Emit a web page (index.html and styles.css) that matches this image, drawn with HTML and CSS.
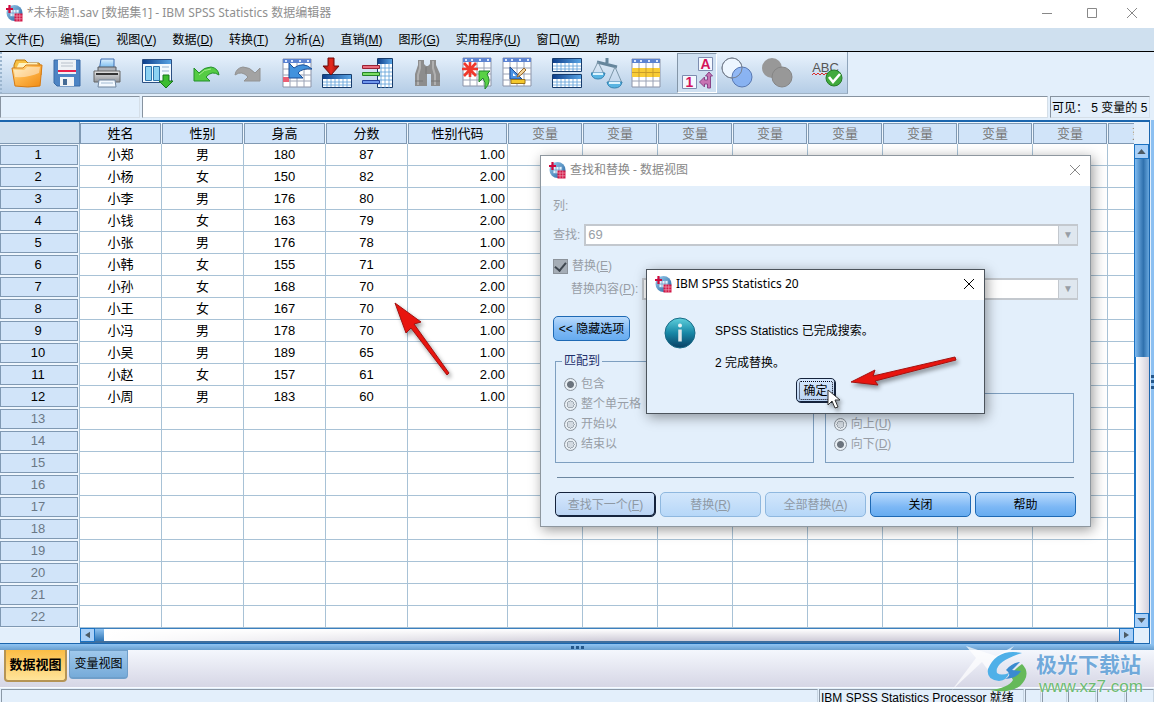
FILE: index.html
```
<!DOCTYPE html>
<html lang="zh-CN">
<head>
<meta charset="utf-8">
<title>*未标题1.sav [数据集1] - IBM SPSS Statistics 数据编辑器</title>
<link rel="stylesheet" href="styles.css">
</head>
<body>
<svg class="defs" width="0" height="0" aria-hidden="true">
  <defs>
    <linearGradient id="gFold" x1="0" y1="0" x2="1" y2="1"><stop offset="0" stop-color="#ffe9a0"/><stop offset=".45" stop-color="#fdb448"/><stop offset="1" stop-color="#f08a12"/></linearGradient>
    <linearGradient id="gBlue" x1="0" y1="0" x2="1" y2="0"><stop offset="0" stop-color="#0e3f8c"/><stop offset="1" stop-color="#58a4e4"/></linearGradient>
    <linearGradient id="gSky" x1="0" y1="0" x2="0" y2="1"><stop offset="0" stop-color="#dff2ff"/><stop offset="1" stop-color="#4ba3e6"/></linearGradient>
    <linearGradient id="gGrey" x1="0" y1="0" x2="0" y2="1"><stop offset="0" stop-color="#e6e6e6"/><stop offset="1" stop-color="#8f9399"/></linearGradient>
    <linearGradient id="gRed" x1="0" y1="0" x2="1" y2="0"><stop offset="0" stop-color="#8e1010"/><stop offset=".5" stop-color="#e8291d"/><stop offset="1" stop-color="#97120e"/></linearGradient>
    <linearGradient id="gInfo" x1="0" y1="0" x2="0" y2="1"><stop offset="0" stop-color="#5fd0dc"/><stop offset=".5" stop-color="#1787a6"/><stop offset="1" stop-color="#0a3f63"/></linearGradient>
    <linearGradient id="gLogo" x1="0" y1="0" x2="1" y2="1"><stop offset="0" stop-color="#9ed0f0"/><stop offset="1" stop-color="#1d5e9c"/></linearGradient>
    <symbol id="app" viewBox="0 0 18 18">
      <circle cx="9.500" cy="9" r="8" fill="url(#gLogo)"/>
      <path d="M5 5.500h9v7H5zM8 6v6M11 6v6M5 9h9" fill="#e4f2fc" stroke="#6a9cc8" stroke-width=".8"/>
      <path d="M4.500 1v8M1 5h7" stroke="#cf0a3c" stroke-width="2.200"/>
      <path d="M9.500 9.500h8v8h-8z" fill="#d11746"/>
      <path d="M12 9.500v8M14.800 9.500v8M9.500 12h8M9.500 14.800h8" stroke="#f3b6c5" stroke-width=".6"/>
    </symbol>
    <symbol id="sheet" viewBox="0 0 30 30">
      <path d="M1 1h28v28H1z" fill="#fff" stroke="#8b93a8"/>
      <path d="M1 1h28v4H1z" fill="#5d84d2"/>
      <path d="M3 3h2m4 0h2m6 0h2m6 0h2" stroke="#dde9ff" stroke-width="2"/>
      <path d="M1 11h28M1 17h28M1 23h28M8 5v24M15 5v24M22 5v24" stroke="#9aa2b5" fill="none"/>
    </symbol>
    <symbol id="minitable" viewBox="0 0 30 14">
      <path d="M.5.5h29v13H.5z" fill="#fff" stroke="#173c6c"/>
      <path d="M1 1h28v4H1z" fill="url(#gBlue)"/>
      <path d="M1 8h28M1 11h28M5 5v8M9 5v8M13 5v8M17 5v8M21 5v8M25 5v8" stroke="#5a9fd8" stroke-width=".8"/>
    </symbol>
  </defs>
</svg>

<div class="app">
  <header class="titlebar">
    <svg class="logo"><use href="#app"/></svg>
    <h1>*未标题1.sav [数据集1] - IBM SPSS Statistics 数据编辑器</h1>
    <div class="winbtns">
      <button aria-label="最小化"><svg viewBox="0 0 12 12"><path d="M1 6.500h10"/></svg></button>
      <button aria-label="最大化"><svg viewBox="0 0 12 12"><path d="M1.500 1.500h9v9h-9z"/></svg></button>
      <button aria-label="关闭"><svg viewBox="0 0 12 12"><path d="M1 1l10 10M11 1L1 11"/></svg></button>
    </div>
  </header>

  <nav class="menubar">
    <button>文件(<u>F</u>)</button><button>编辑(<u>E</u>)</button><button>视图(<u>V</u>)</button><button>数据(<u>D</u>)</button><button>转换(<u>T</u>)</button><button>分析(<u>A</u>)</button><button>直销(<u>M</u>)</button><button>图形(<u>G</u>)</button><button>实用程序(<u>U</u>)</button><button>窗口(<u>W</u>)</button><button>帮助</button>
  </nav>

  <div class="toolrow">
  <div class="toolbar" role="toolbar">
    <div class="group">
      <button aria-label="打开"><svg viewBox="0 0 32 32"><path d="M3 8l2-5h9l3 3h11l2 3v9H3z" fill="#f7c044" stroke="#b97a14"/><path d="M8 6h18l3 6H5z" fill="#fff3bf"/><path d="M1 11h11l3-3h16l-2 21q-12 2-25 0z" fill="url(#gFold)" stroke="#d57a14"/><path d="M3 13h10l3-3h13l-1 6q-11 5-24 4z" fill="#fff" opacity=".45"/></svg></button>
      <button aria-label="保存"><svg viewBox="0 0 32 32"><path d="M3 3h26v26H6l-3-3z" fill="#4d84c4" stroke="#3a6ba5"/><path d="M7 3h18v14H7z" fill="#eef2f6"/><path d="M10 6h12M10 9h12" stroke="#b8c0ca"/><path d="M7 14h18" stroke="#ea1f4b" stroke-width="2"/><path d="M9 20h14v9H9z" fill="#f2f4f6"/><path d="M12 22h4v6h-4z" fill="#456b95"/></svg></button>
      <button aria-label="打印"><svg viewBox="0 0 32 32"><path d="M10 2h13v12H8z" fill="url(#gSky)" stroke="#3a6db2"/><path d="M7 10h18v5H7z" fill="#aeb2b8" stroke="#55595f"/><path d="M3 14h26v11H3z" fill="url(#gGrey)" stroke="#666"/><path d="M5 17h22" stroke="#333" stroke-width="2"/><path d="M8 23h16l1 7H7z" fill="#f3f9ff" stroke="#70869f"/><path d="M10 26h12" stroke="#a3bbd3"/></svg></button>
    </div>
    <div class="group">
      <button aria-label="重新调用对话框"><svg viewBox="0 0 32 32"><path d="M1.500 2.500h29v23h-29z" fill="#f3faff" stroke="#2b4f82"/><path d="M2 3h28v4H2z" fill="url(#gBlue)"/><path d="M4.500 9.500h6v14h-6zM12.500 9.500h6v14h-6z" fill="#8dd2f3" stroke="#2d73ac"/><path d="M21 10h7M21 14h7" stroke="#99b5d0"/><path d="M22 18h6v6h4l-7 7-7-7h4z" fill="#3cbc2f" stroke="#16771a"/></svg></button>
    </div>
    <div class="group">
      <button aria-label="撤消"><svg viewBox="0 0 32 32"><path d="M3 11l5 5q5-6 12-6 7 1 8 8-7-5-13 2l4 4H3z" fill="#55cc44" stroke="#238f2a"/><path d="M8 18q5-6 12-6" stroke="#a5ee8c" fill="none"/></svg></button>
      <button aria-label="重做"><svg viewBox="0 0 32 32"><path d="M29 11l-5 5q-5-6-12-6-7 1-8 8 7-5 13 2l-4 4h16z" fill="#a3a3a3" stroke="#929292"/></svg></button>
    </div>
    <div class="group">
      <button aria-label="转到个案"><svg viewBox="0 0 32 32"><use href="#sheet" x="1" y="1" width="30" height="30"/><path d="M2 20h6v5H2z" fill="#eb5f74"/><path d="M8 6v15h14l-5-5q4-5 14-4-9-8-18-1z" fill="#4292dd" stroke="#1b4f98"/></svg></button>
      <button aria-label="转到变量"><svg viewBox="0 0 32 32"><use href="#minitable" x="1" y="17" width="30" height="14"/><path d="M7 1h6v8h5l-8 9-8-9h5z" fill="url(#gRed)" stroke="#710d0a"/></svg></button>
      <button aria-label="变量"><svg viewBox="0 0 32 32"><path d="M16.500 1.500h15v29h-15z" fill="#fff" stroke="#173c6c"/><path d="M17 2h14v5H17z" fill="url(#gBlue)"/><path d="M17 11h14M17 15h14M17 19h14M17 23h14M17 27h14M20 7v24M24 7v24M28 7v24" stroke="#5a9fd8" stroke-width=".8"/><path d="M1.500 8.500h17v3h-17z" fill="#e96d7e" stroke="#9b2233"/><path d="M1.500 15.500h17v3h-17z" fill="#7add64" stroke="#268427"/><path d="M1.500 23.500h17v3h-17z" fill="#6f97ec" stroke="#233f9c"/></svg></button>
    </div>
    <div class="group">
      <button aria-label="查找"><svg viewBox="0 0 32 32"><path d="M7 3h6v4l2 2h2l2-2V3h6v5l4 9v12h-9V17h-4v12H4V17l3-9z" fill="#8d8d8d"/><path d="M9 4v7l-2 7v10M22 4v7l2 7v10" stroke="#b0b0b0" stroke-width="2" fill="none"/><path d="M4 24h8M20 24h9M15 10v7" stroke="#777"/></svg></button>
    </div>
    <div class="group">
      <button aria-label="插入个案"><svg viewBox="0 0 32 32"><use href="#sheet" x="1" y="0" width="30" height="30"/><path d="M9 5v15M1 12h16M3 6l12 13M15 6L3 19" stroke="#f0382b" stroke-width="2.600"/><path d="M18 14h11l-3 3q5 8-2 15 1-7-2-11l-4 4z" fill="#59d245" stroke="#21852c"/></svg></button>
      <button aria-label="插入变量"><svg viewBox="0 0 32 32"><use href="#sheet" x="1" y="0" width="30" height="30"/><path d="M9 10l12 12H9z" fill="#4a92e4" stroke="#1b4a97"/><path d="M12 16l3 3h-3z" fill="#fff"/><path d="M10 22.500h14v4H10z" fill="#f4c82c" stroke="#9d751b"/><path d="M16 20l2-4 5-5 2 2-5 5z" fill="#f3d49b" stroke="#9b6b2c"/></svg></button>
    </div>
    <div class="group">
      <button aria-label="拆分文件"><svg viewBox="0 0 32 32"><use href="#minitable" x="1" y="1" width="30" height="14"/><use href="#minitable" x="1" y="17" width="30" height="14"/></svg></button>
      <button aria-label="加权个案"><svg viewBox="0 0 32 32"><path d="M16 1v5M6 5l20 5" stroke="#66869c" stroke-width="3"/><path d="M7 5L1 17M7 5l6 12M24 10l-7 16M24 10l7 16" stroke="#7c97aa" fill="none"/><path d="M0 16h14q-1 6-7 6t-7-6zM16 25h15q-1 6-7.500 6T16 25z" fill="#58b4e2" stroke="#3884b2"/><path d="M2 17h10M18 26h11" stroke="#dbf4ff" stroke-width="2"/></svg></button>
      <button aria-label="选择个案"><svg viewBox="0 0 32 32"><use href="#sheet" x="0" y="1" width="30" height="30"/><path d="M1 11h28v9H1z" fill="#f8cc36"/><path d="M1 15.500h28M8 11v9M15 11v9M22 11v9" stroke="#c99d2a"/></svg></button>
    </div>
    <div class="group">
      <button class="pressed" aria-label="值标签" aria-pressed="true"><svg viewBox="0 0 32 32"><path d="M17.500.5h14v13h-14zM1.500 18.500h14v13h-14z" fill="#f4f8ff" stroke="#7d8db0"/><text x="24.500" y="12" class="ic">A</text><text x="8.500" y="30" class="ic">1</text><path d="M28 15l3.500 4h-2v12h-3v-4h-3v3l-5-5 5-5v3h3v-4h-2z" fill="#c773b3" stroke="#8a4488"/></svg></button>
      <button aria-label="使用变量集"><svg viewBox="0 0 32 32"><circle cx="11" cy="11" r="10" fill="#edf6ff" stroke="#7b8594"/><circle cx="21" cy="20" r="10" fill="#79a9f3" fill-opacity=".8" stroke="#5878b2"/><circle cx="11" cy="11" r="10" fill="none" stroke="#7b8594"/></svg></button>
      <button aria-label="显示所有变量"><svg viewBox="0 0 32 32"><circle cx="11" cy="11" r="10" fill="#989898"/><circle cx="21" cy="20" r="10" fill="#989898" stroke="#858585"/></svg></button>
    </div>
    <div class="group">
      <button aria-label="拼写检查"><svg viewBox="0 0 32 32"><text x="14.500" y="15" class="abc">ABC</text><path d="M1 18l2-2 2 2 2-2 2 2 2-2 2 2 2-2 2 2" fill="none" stroke="#d82b2b"/><circle cx="23" cy="21" r="8" fill="#41aa3d" stroke="#277c2a"/><path d="M18 20l4 5 7-8" fill="none" stroke="#fff" stroke-width="2.600"/></svg></button>
    </div>
  </div>
  </div>

  <div class="entry">
    <input class="cellname" aria-label="单元格" readonly>
    <input class="cellvalue" aria-label="单元格值">
    <output class="visible">可见： 5 变量的 5</output>
  </div>

  <main class="workspace">
    <div class="sheet">
      <div class="tablewrap">
        <table id="grid">
          <colgroup><col class="c-row"><col class="c-data" span="4"><col class="c-code"><col class="c-var" span="9"></colgroup>
          <thead></thead>
          <tbody></tbody>
        </table>
      </div>
      <div class="vscroll">
        <button aria-label="向上滚动"><svg viewBox="0 0 10 6"><path d="M5 0l5 6H0z"/></svg></button>
        <div class="vthumb"></div><div class="vtrack"></div>
        <button aria-label="向下滚动"><svg viewBox="0 0 10 6"><path d="M0 0h10L5 6z"/></svg></button>
      </div>
      <div class="hscroll">
        <button aria-label="向左滚动"><svg viewBox="0 0 6 8"><path d="M6 0v8L0 4z"/></svg></button>
        <div class="hthumb"></div><div class="htrack"></div>
        <button aria-label="向右滚动"><svg viewBox="0 0 6 8"><path d="M0 0v8l6-4z"/></svg></button>
      </div>
    </div>
    <div class="sidesplit"><i></i></div>
  </main>
  <div class="split"><i></i><i></i><i></i></div>

  <div class="tabs" role="tablist">
    <button class="on" role="tab" aria-selected="true">数据视图</button>
    <button role="tab" aria-selected="false">变量视图</button>
  </div>

  <footer class="status">
    <span class="s-info"></span><span class="s-proc">IBM SPSS Statistics Processor 就绪</span><span class="s-a"></span><span class="s-b"></span><span class="s-c"></span><span class="s-c"></span><span class="s-c"></span>
  </footer>
</div>

<section class="window find" role="dialog" aria-labelledby="findTitle">
  <header><svg class="logo"><use href="#app"/></svg><h2 id="findTitle">查找和替换 - 数据视图</h2>
    <button class="x" aria-label="关闭"><svg viewBox="0 0 12 12"><path d="M1 1l10 10M11 1L1 11"/></svg></button></header>
  <form class="findbody">
    <p class="colname">列:</p>
    <div class="row"><label for="what">查找:</label><span class="combo"><select id="what" disabled><option>69</option></select></span></div>
    <div class="row check"><input type="checkbox" id="rep" checked disabled><label for="rep">替换(<u>E</u>)</label></div>
    <div class="row inset"><label for="with">替换内容(<u>P</u>):</label><span class="combo"><select id="with" disabled><option></option></select></span></div>
    <button type="button" class="btn more">&lt;&lt; 隐藏选项</button>
    <div class="sets">
      <fieldset class="match"><legend>匹配到</legend>
        <label><input type="radio" name="m" checked disabled><span>包含</span></label>
        <label><input type="radio" name="m" disabled><span>整个单元格</span></label>
        <label><input type="radio" name="m" disabled><span>开始以</span></label>
        <label><input type="radio" name="m" disabled><span>结束以</span></label>
      </fieldset>
      <fieldset class="dir" aria-label="方向">
        <label><input type="radio" name="d" disabled><span>向上(<u>U</u>)</span></label>
        <label><input type="radio" name="d" checked disabled><span>向下(<u>D</u>)</span></label>
      </fieldset>
    </div>
    <hr>
    <div class="actions">
      <button type="button" class="btn default" disabled>查找下一个(<u>F</u>)</button>
      <button type="button" class="btn" disabled>替换(<u>R</u>)</button>
      <button type="button" class="btn" disabled>全部替换(<u>A</u>)</button>
      <button type="button" class="btn">关闭</button>
      <button type="button" class="btn">帮助</button>
    </div>
  </form>
</section>

<section class="window msg" role="alertdialog" aria-labelledby="msgTitle">
  <header><svg class="logo"><use href="#app"/></svg><h2 id="msgTitle">IBM SPSS Statistics 20</h2>
    <button class="x" aria-label="关闭"><svg viewBox="0 0 12 12"><path d="M1 1l10 10M11 1L1 11"/></svg></button></header>
  <div class="msgbody">
    <svg class="info" viewBox="0 0 32 32"><circle cx="16" cy="16" r="15" fill="url(#gInfo)" stroke="#176a86"/><circle cx="16" cy="8.500" r="2" fill="#e8f3f5"/><path d="M16 12.500v12" stroke="#dfe6e8" stroke-width="3.500"/></svg>
    <div class="text"><p>SPSS Statistics 已完成搜索。</p><p>2 完成替换。</p></div>
  </div>
  <div class="ok"><button class="btn default focus">确定</button></div>
</section>

<svg class="arrow one" viewBox="0 0 64 80" aria-hidden="true"><path d="M4 3l26 19-7 2 35 49-2 2-36-47-5 5z" fill="#e8150f" stroke="#a31210"/></svg>
<svg class="arrow two" viewBox="0 0 116 40" aria-hidden="true"><path d="M5 29l24-12-2 6 82-19 1 3-81 21 3 4z" fill="#e8150f" stroke="#a31210"/></svg>
<svg class="cursor" viewBox="0 0 14 20" aria-hidden="true"><path d="M1 1v15l4-4 3 7 3-1-3-7h5z" fill="#fff" stroke="#333"/></svg>

<div class="watermark">
  <svg viewBox="0 0 84 52" aria-hidden="true"><path d="M14 2l30 10L62 2 50 16q-8 4-14 10L30 18 0 46l24-32z" fill="#fff" opacity=".7"/><path d="M70 9Q45 4 36 25q-2 11 11 12 8-1 10-8-8 3-12 0-3-11 25-20z" fill="#4fb0e8"/><path d="M70 20q10 10-2 22-11 8-30 4 18-2 23-10-5-6 9-16z" fill="#66b95a"/><path d="M54 26q6-7 14-8l-8 8 9 1q-5 8-16 8 8-4 1-9z" fill="#3a8bd0"/></svg>
  <div><strong>极光下载站</strong><span>www.xz7.com</span></div>
</div>
<script src="app.js"></script>
</body>
</html>
```
FILE: styles.css
```
* { box-sizing: border-box; }
body { margin: 0; height: 100vh; overflow: hidden; background: #e3effb; color: #000; font: 12px/16px "Liberation Sans", "Noto Sans CJK SC", sans-serif; }
button, input, select { font: inherit; color: inherit; margin: 0; padding: 0; border: 0; border-radius: 0; background: none; }
h1, h2, p { margin: 0; font-size: 12px; font-weight: 400; }
.defs { position: absolute; }
.app { display: flex; flex-direction: column; }
.logo { width: 18px; height: 18px; flex: none; }

.titlebar { display: flex; align-items: center; height: 28px; padding: 0 4px 3px 5px; background: #fff; color: #8f8f8f; }
.titlebar h1 { flex: 1; margin-left: 4px; font-family: "Noto Sans", "Noto Sans CJK SC", sans-serif; }
.winbtns { display: flex; }
.winbtns button { width: 45px; height: 24px; display: grid; place-items: center; }
.winbtns svg, .x svg { display: block; width: 12px; height: 12px; fill: none; stroke: #888; }
.winbtns button:last-child { width: 36px; }

.menubar { display: flex; gap: 16px; height: 24px; padding: 0 5px; background: #cfe0ef; border-bottom: 1px solid #000; }
.menubar button { white-space: nowrap; }

.toolrow { display: flex; background: #e3effb; }
.toolbar { display: flex; gap: 10px; height: 42px; padding: 1px 0 0 5px; border-left: 2px dotted #9cb6cf; border-right: 1px solid #8fa5bb; border-bottom: 1px solid #9fb2c5; background: linear-gradient(#e9f3fd, #b5cde6); }
.group { display: flex; }
.group button { width: 40px; height: 40px; display: grid; place-items: center; }
.group svg { width: 32px; height: 32px; }
.group .pressed { border: 1px solid #fff; border-top-color: #8496a8; border-left-color: #8496a8; background: #cfe0f1; }
.ic { font: bold 14px "Liberation Sans", sans-serif; fill: #d3135a; text-anchor: middle; }
.abc { font: 13px "Liberation Sans", sans-serif; fill: #555; text-anchor: middle; }

.entry { display: flex; gap: 2px; height: 26px; padding: 1px 4px 2px 0; border-top: 1px solid #e3effb; }
.entry > * { border: 1px solid #d5dfe8; border-top-color: #8793a0; border-left-color: #8793a0; }
.cellname { width: 140px; background: #e3f0fc; }
.cellvalue { flex: 1; background: #fff; }
.visible { padding: 3px 0 0 1px; width: 100px; white-space: pre; overflow: hidden; }

.workspace { display: flex; }
.sheet { flex: 1; min-width: 0; display: grid; grid-template-columns: 80px 1fr 15px; border-top: 2px solid #1b66ae; border-right: 1px solid #1b66ae; border-bottom: 1px solid #1b66ae; }
.tablewrap { grid-column: 1 / 3; overflow: hidden; background: #fff; }
table { width: 1183px; table-layout: fixed; border-collapse: separate; border-spacing: 0; font-size: 13px; line-height: 18px; text-align: center; }
.c-row { width: 80px; } .c-data { width: 82px; } .c-code { width: 100px; } .c-var { width: 75px; }
tr { height: 22px; }
th, td { padding: 0; font-weight: 400; white-space: nowrap; }
td { border-right: 1px solid #a8c2d6; border-bottom: 1px solid #a8c2d6; }
td.num { text-align: right; padding-right: 2px; }
th div { border: 1px solid #8099b3; background: #d1e4f9; height: 20px; line-height: 18px; }
thead th { background: #eef6fe; padding-right: 1px; }
thead th.corner { padding: 0; }
thead .corner div { background: #cfe0f0; border-width: 0 1px 1px 0; height: 22px; }
thead div { height: 21px; line-height: 19px; }
tbody th { background: #eef6fe; padding-right: 1px; border-right: 1px solid #a8c2d6; }
tbody th div { padding-right: 2px; }
.off { color: #777; }
tbody .off { color: #6b7886; }

.vscroll { display: flex; flex-direction: column; padding-top: 22px; }
.vscroll button, .hscroll button { display: grid; place-items: center; flex: none; width: 15px; height: 15px; border: 1px solid #1b72c2; background: #a9d0f8; }
.vscroll svg { width: 9px; height: 5px; } .hscroll svg { width: 5px; height: 8px; }
.vscroll svg, .hscroll svg { fill: #4c5b66; }
.vthumb { flex: 198; border-left: 1px solid #1b72c2; background: linear-gradient(90deg, #7fbaf0, #2f71ae 60%, #69a8df); }
.vtrack { flex: 256; border-left: 2px solid #1b72c2; background: linear-gradient(90deg, #fff, #d3d1dc); }
.hscroll { grid-column: 2; display: flex; height: 15px; border-top: 1px solid #3c80bf; border-bottom: 2px solid #3f6f9e; background: #fff; }
.hscroll button { height: 14px; margin-top: -1px; }
.hthumb { width: 9px; background: linear-gradient(#8cc1f0, #2f75b5); }
.htrack { flex: 1; background: linear-gradient(90deg, #fff, #fff0 50%), linear-gradient(#fff, #cfccd8); }
.sidesplit { width: 3px; margin-left: 1px; display: flex; align-items: center; background: #8cc0f2; }
.sidesplit i { width: 3px; height: 14px; border-left: 3px dotted #24588c; }
.split { display: flex; justify-content: center; align-items: center; gap: 2px; height: 6px; background: linear-gradient(#8fc4f3, #6a9fce); }
.split i { width: 3px; height: 3px; background: #24588c; }

.tabs { display: flex; align-items: flex-start; gap: 2px; height: 37px; padding-left: 4px; background: linear-gradient(#f4f7fd, #d6d6e5); }
.tabs button { height: 29px; width: 59px; padding-bottom: 1px; border: 1px solid #6f9fca; border-bottom-width: 2px; border-radius: 0 0 4px 4px; background: linear-gradient(#9fc8ec, #76abd9); }
.tabs .on { width: 63px; height: 32px; padding: 0; border: 2px solid #b59455; border-top: 0; background: linear-gradient(#fbbd45, #ffe49a); font-weight: 700; font-size: 13px; }

.status { display: flex; gap: 1px; height: 22px; padding: 1px 0 0 1px; border-top: 1px solid #f8fbff; white-space: nowrap; }
.status span { border: 1px solid #8b98a6; border-right-color: #c7d5e2; }
.s-info { flex: 1; } .s-proc { width: 205px; padding-left: 1px; } .s-a { width: 16px; } .s-b { width: 25px; } .s-c { width: 28px; }

.window { position: absolute; border: 1px solid #8e979f; background: #e3effb; box-shadow: 2px 3px 12px rgba(0, 0, 0, .4); }
.window header { display: flex; align-items: center; gap: 4px; height: 30px; padding: 0 9px 2px 7px; background: #fff; }
.window h2 { flex: 1; font-family: "Noto Sans", "Noto Sans CJK SC", sans-serif; }
.x { display: grid; place-items: center; }
.find { left: 540px; top: 155px; width: 551px; }
.find h2 { color: #888; }
.findbody { padding: 12px 12px 9px; color: #989ea6; }
.row { display: flex; align-items: center; gap: 4px; height: 22px; }
.colname { height: 26px; }
.inset { padding-left: 18px; }
.check { height: 20px; margin: 10px 0 2px; }
.check input { appearance: none; width: 15px; height: 15px; border: 1px solid #8c939b; background: #a5adb6; display: grid; place-items: center; }
.check input::after { content: ""; width: 5px; height: 9px; margin-bottom: 3px; border: solid #3f4750; border-width: 0 2px 2px 0; transform: rotate(40deg); }
.combo { flex: 1; display: flex; height: 22px; border: 2px solid #c3c8ce; background: #fff; border-right-width: 1px; }
.combo select { flex: 1; appearance: none; padding: 0 2px; opacity: 1; color: #989ea6; font-size: 13px; }
.combo::after { content: "▼"; width: 18px; background: #dfe7ef; border-left: 1px solid #c3c8ce; font-size: 10px; line-height: 18px; text-align: center; }
.inset + .btn { margin-top: 16px; }
.btn { height: 25px; border: 1px solid #1e69b4; border-radius: 5px; background: linear-gradient(#b9dafc, #7db8f5 60%, #66abf0); color: #000; white-space: nowrap; }
.btn:disabled { border-color: #8fb8df; background: linear-gradient(#d2e6fb, #b6d7f8); color: #8e99a5; }
.btn.default { border: 1px solid #15233c; box-shadow: inset -1px -1px #15233c; background: linear-gradient(#d5e7fc, #b9d3f3); }
.more { width: 77px; }
.sets { display: flex; align-items: flex-end; gap: 11px; margin: 12px 4px 0 2px; }
fieldset { margin: 0; border: 1px solid #7e9fc0; min-width: 0; }
legend { margin-left: -2px; padding: 0 2px; color: #1f2f6b; line-height: 17px; }
.match { flex: 259; padding: 4px 8px 8px; }
.dir { flex: 249; padding: 20px 8px 8px; }
.sets label { display: flex; align-items: center; gap: 4px; height: 20px; }
.sets input { appearance: none; width: 13px; height: 13px; border-radius: 50%; border: 1px solid #8b939c; background: radial-gradient(circle, #d3dae1 0 3px, #a2abb4 3px 4px, #e9eff4 4px); }
.sets input:checked { background: radial-gradient(circle, #6c747d 0 3px, #e9eff4 4px); }
hr { margin: 14px 4px 14px 4px; border: 0; border-top: 1px solid #6d87a0; }
.actions { display: grid; grid-template-columns: repeat(5, 1fr); gap: 4px; margin: 0 2px; }

.msg { left: 646px; top: 269px; width: 339px; border-color: #4c545c; }
.msg .x svg { stroke: #000; }
.msgbody { display: flex; gap: 19px; padding: 17px 17px 0; }
.info { width: 32px; height: 32px; }
.text { display: grid; gap: 16px; padding-top: 6px; }
.ok { display: flex; justify-content: center; padding: 7px 0 10px; }
.focus { width: 40px; padding: 0; outline: 1px dotted #001; outline-offset: -4px; }

.arrow, .cursor { position: absolute; filter: drop-shadow(2px 3px 2px rgba(0, 0, 0, .4)); }
.one { left: 391px; top: 300px; width: 64px; height: 80px; }
.two { left: 846px; top: 353px; width: 116px; height: 40px; }
.cursor { left: 827px; top: 389px; width: 14px; height: 20px; }

.watermark { position: absolute; right: 10px; bottom: 6px; display: flex; align-items: flex-end; }
.watermark svg { width: 84px; height: 52px; }
.watermark div { display: grid; text-shadow: 0 0 2px #fff; width: 108px; }
.watermark strong { color: #71a9da; font-size: 21px; line-height: 26px; white-space: nowrap; }
.watermark span { color: #6dbb72; font-size: 17px; line-height: 18px; padding-left: 3px; }
```
FILE: app.js
```
const headers = ["姓名", "性别", "身高", "分数", "性别代码"];
const people = [
  ["小郑", "男", 180, 87], ["小杨", "女", 150, 82], ["小李", "男", 176, 80],
  ["小钱", "女", 163, 79], ["小张", "男", 176, 78], ["小韩", "女", 155, 71],
  ["小孙", "女", 168, 70], ["小王", "女", 167, 70], ["小冯", "男", 178, 70],
  ["小吴", "男", 189, 65], ["小赵", "女", 157, 61], ["小周", "男", 183, 60]
];
const emptyVars = 9;
const rowCount = 22;

let head = '<tr><th class="corner"><div></div></th>';
for (const h of headers) head += `<th scope="col"><div>${h}</div></th>`;
for (let i = 0; i < emptyVars; i++) head += '<th scope="col" class="off"><div>变量</div></th>';
document.querySelector("#grid thead").innerHTML = head + "</tr>";

let body = "";
for (let r = 0; r < rowCount; r++) {
  const p = people[r];
  body += `<tr><th scope="row" class="${p ? "" : "off"}"><div>${r + 1}</div></th>`;
  for (let c = 0; c < 4; c++) body += `<td>${p ? p[c] : ""}</td>`;
  body += `<td class="num">${p ? (p[1] === "男" ? "1.00" : "2.00") : ""}</td>`;
  body += "<td></td>".repeat(emptyVars) + "</tr>";
}
document.querySelector("#grid tbody").innerHTML = body;
```
